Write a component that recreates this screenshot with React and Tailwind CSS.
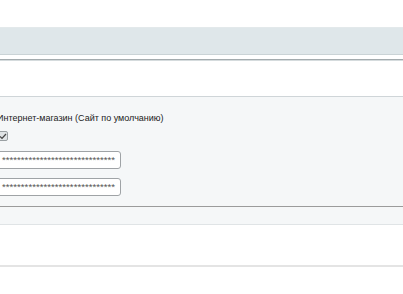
import React from 'react';

const STARS = '*'.repeat(30);

function PasswordField({ value }) {
  return (
    <div className="flex h-[18px] w-[124px] items-center overflow-hidden rounded-[3px] border border-[#9fa3a6] bg-white pl-[4px] text-[9.7px] leading-none whitespace-nowrap text-[#555]">
      {value}
    </div>
  );
}

export default function App() {
  return (
    <div className="h-[294px] w-[403px] overflow-hidden bg-white font-['Liberation_Sans',Arial,sans-serif]">
      <div className="h-[27px]" />

      {/* header band */}
      <div className="h-[28px] border-t border-[#e3e9eb] border-b border-b-[#cad3d6] bg-[#dfe7ea]" />
      <div className="h-[4px]" />
      <div className="h-[2px] border-t border-[#a3abae] border-b border-b-[#d5dbdd]" />

      <div className="h-[35px]" />

      {/* settings panel */}
      <div className="border-t border-[#cfd5d8] bg-[#f5f7f8]">
        <div className="-ml-[3px] flex flex-col pt-[15px] pb-[10px]">
          <div className="text-[9px] leading-[12px] text-[#1b1b1b]">
            Интернет-магазин (Сайт по умолчанию)
          </div>
          <div className="mt-[7px] flex h-[10px] w-[11px] items-center justify-center rounded-[2px] border border-[#9aa0a3] bg-[#dfe3e5]">
            <svg width="8" height="7" viewBox="0 0 8 7" fill="none">
              <path d="M1 3.5 L3 5.5 L7 1" stroke="#444" strokeWidth="1.2" />
            </svg>
          </div>
          <div className="mt-[10px] flex flex-col gap-[9px]">
            <PasswordField value={STARS} />
            <PasswordField value={STARS} />
          </div>
        </div>
        <div className="h-[1px] bg-[#9b9b9b]" />
        <div className="h-[18px] border-b border-[#e0e4e6]" />
      </div>

      <div className="h-[40px]" />
      <div className="h-[2px] bg-[#e4e4e4]" />
    </div>
  );
}
